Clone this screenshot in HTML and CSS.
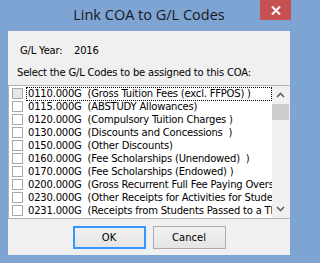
FILE: index.html
```html
<!DOCTYPE html>
<html>
<head>
<meta charset="utf-8">
<title>Link COA to G/L Codes</title>
<link rel="stylesheet" href="styles.css">
</head>
<body>
<div class="window">
  <div class="titlebar">
    <span class="spacer"></span>
    <span class="title">Link COA to G/L Codes</span>
    <span class="close">
      <svg width="10" height="9" viewBox="0 0 10 9"><path d="M1 0.5 L9 8.5 M9 0.5 L1 8.5" stroke="#fff" stroke-width="2"/></svg>
    </span>
  </div>
  <div class="client">
    <div class="year"><span class="year-label">G/L Year:</span><span>2016</span></div>
    <div class="prompt">Select the G/L Codes to be assigned to this COA:</div>
    <div class="listbox">
      <div class="items">
        <div class="row focus"><span class="box hot"></span><span class="text">0110.000G&nbsp; (Gross Tuition Fees (excl. FFPOS) )</span></div>
        <div class="row"><span class="box"></span><span class="text">0115.000G&nbsp; (ABSTUDY Allowances)</span></div>
        <div class="row"><span class="box"></span><span class="text">0120.000G&nbsp; (Compulsory Tuition Charges )</span></div>
        <div class="row"><span class="box"></span><span class="text">0130.000G&nbsp; (Discounts and Concessions&nbsp; )</span></div>
        <div class="row"><span class="box"></span><span class="text">0150.000G&nbsp; (Other Discounts)</span></div>
        <div class="row"><span class="box"></span><span class="text">0160.000G&nbsp; (Fee Scholarships (Unendowed)&nbsp; )</span></div>
        <div class="row"><span class="box"></span><span class="text">0170.000G&nbsp; (Fee Scholarships (Endowed) )</span></div>
        <div class="row"><span class="box"></span><span class="text">0200.000G&nbsp; (Gross Recurrent Full Fee Paying Overseas Students)</span></div>
        <div class="row"><span class="box"></span><span class="text">0230.000G&nbsp; (Other Receipts for Activities for Students)</span></div>
        <div class="row"><span class="box"></span><span class="text">0231.000G&nbsp; (Receipts from Students Passed to a Third Party)</span></div>
      </div>
      <div class="scrollbar">
        <svg class="arrow" width="9" height="6" viewBox="0 0 9 6"><path d="M1 5 L4.5 1.5 L8 5" fill="none" stroke="#606060" stroke-width="1.6"/></svg>
        <div class="thumb"></div>
        <div class="track"></div>
        <svg class="arrow" width="9" height="6" viewBox="0 0 9 6"><path d="M1 1 L4.5 4.5 L8 1" fill="none" stroke="#606060" stroke-width="1.6"/></svg>
      </div>
    </div>
    <div class="buttons">
      <button class="btn default">OK</button>
      <button class="btn">Cancel</button>
    </div>
  </div>
</div>
</body>
</html>
```
FILE: styles.css
```css
html, body {
  margin: 0;
  padding: 0;
  background: #7ea4d4;
}
.window {
  width: 298px;
  height: 263px;
  background: #7ea4d4;
  display: flex;
  flex-direction: column;
  font-family: "DejaVu Sans", sans-serif;
  font-size: 10px;
  letter-spacing: -0.2px;
  color: #000;
}
.titlebar {
  height: 31px;
  display: grid;
  grid-template-columns: 1fr auto 1fr;
  align-items: start;
}
.title {
  font-family: "Open Sans", sans-serif;
  font-size: 14.5px;
  letter-spacing: 0;
  color: #1a1a1a;
  line-height: 20px;
  padding-top: 5px;
  white-space: nowrap;
}
.close {
  justify-self: end;
  margin-right: 7px;
  width: 31px;
  height: 20px;
  background: #c75050;
  display: flex;
  align-items: center;
  justify-content: center;
}
.client {
  margin: 0 8px;
  height: 224px;
  background: #f0f0f0;
  display: flex;
  flex-direction: column;
}
.year {
  margin-top: 13px;
  padding-left: 12px;
  line-height: 13px;
  display: flex;
}
.year-label {
  width: 54px;
}
.prompt {
  margin-top: 9px;
  padding-left: 9px;
  line-height: 13px;
}
.listbox {
  margin-top: 6px;
  height: 134px;
  box-sizing: border-box;
  border: 1px solid #adb2b5;
  border-right-color: #f0f0f0;
  background: #fff;
  display: flex;
}
.items {
  flex: 1;
  padding-top: 1px;
  overflow: hidden;
  min-width: 0;
}
.row {
  height: 13px;
  display: flex;
  align-items: center;
  padding-left: 3px;
  white-space: nowrap;
}
.box {
  flex: none;
  width: 11px;
  height: 11px;
  box-sizing: border-box;
  border: 1px solid #a8a8a8;
  background: #fff;
  margin-right: 3px;
}
.box.hot {
  background: #e6e6e6;
}
.text {
  line-height: 12px;
  padding: 0 1px;
  border: 1px dotted transparent;
}
.row.focus .text {
  border-color: #000;
  flex: 1;
}
.scrollbar {
  width: 17px;
  flex: none;
  background: #f0f0f0;
  display: flex;
  flex-direction: column;
  align-items: center;
}
.arrow {
  margin: 6px 0 6px;
}
.thumb {
  width: 17px;
  height: 16px;
  background: #cdcdcd;
}
.track {
  flex: 1;
}
.buttons {
  margin-top: 7px;
  display: flex;
  justify-content: center;
  gap: 7px;
}
.btn {
  width: 73px;
  height: 23px;
  box-sizing: border-box;
  border: 1px solid #acacac;
  background: linear-gradient(#f0f0f0, #e5e5e5);
  font-family: "DejaVu Sans", sans-serif;
  font-size: 10px;
  color: #000;
  padding: 0;
}
.btn.default {
  border-color: #3399ff;
  box-shadow: inset 0 0 0 1px #3399ff;
}
```
